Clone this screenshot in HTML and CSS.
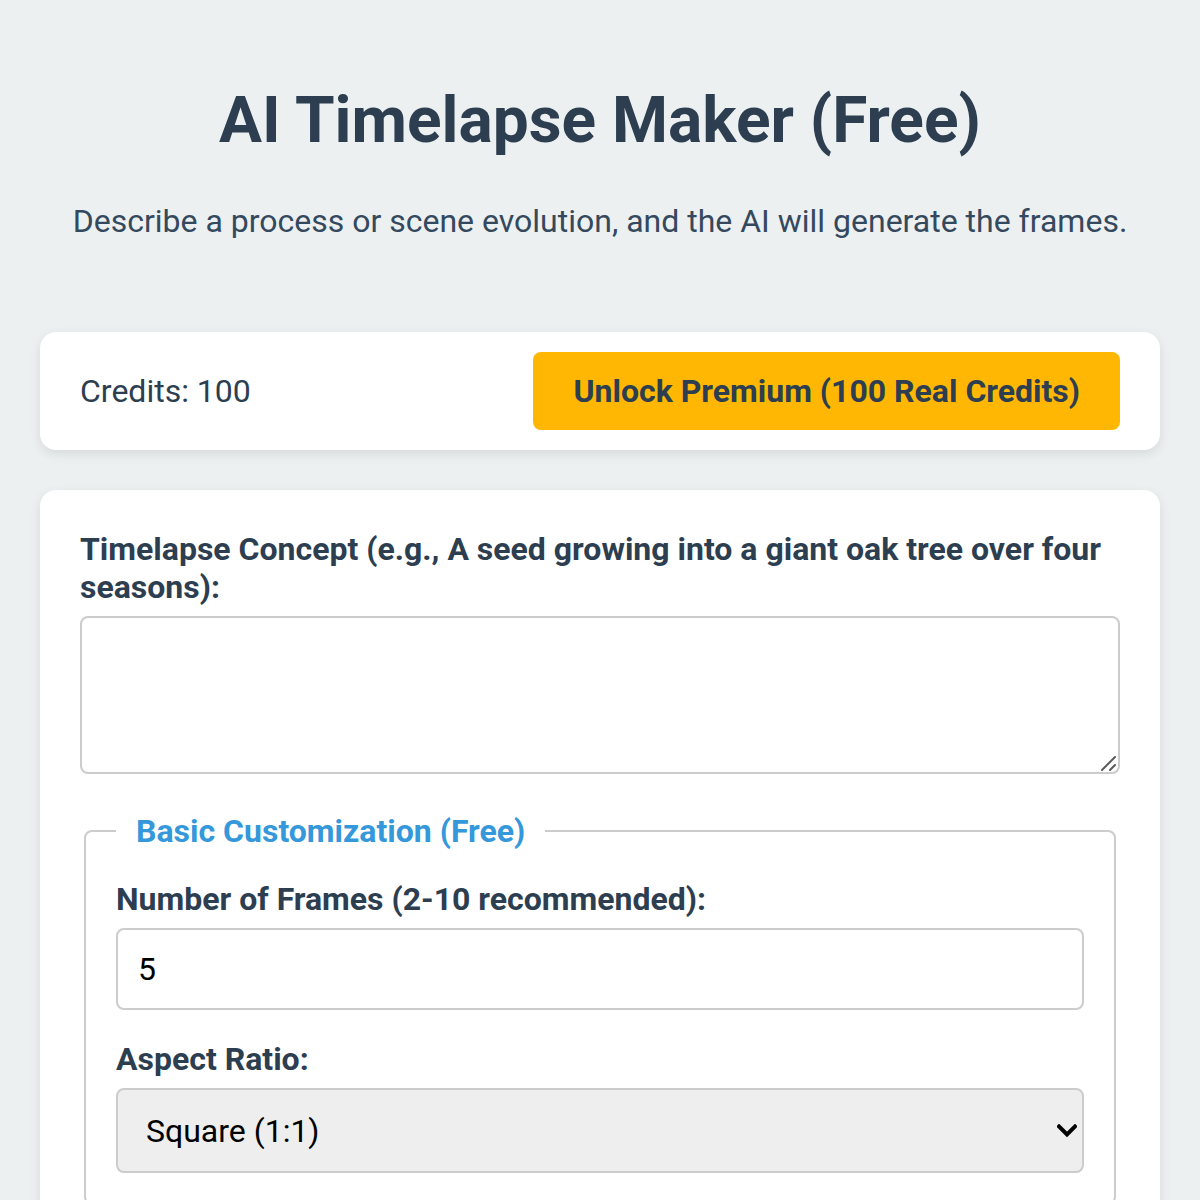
FILE: index.html
```html
<!DOCTYPE html>
<html lang="en">
<head>
<meta charset="utf-8">
<title>AI Timelapse Maker (Free)</title>
<link rel="stylesheet" href="styles.css">
</head>
<body>
<main class="page">
  <header class="intro">
    <h1 class="title">AI Timelapse Maker (Free)</h1>
    <p class="subtitle">Describe a process or scene evolution, and the AI will generate the frames.</p>
  </header>

  <section class="card credits-bar">
    <span class="credits">Credits: <span id="credit-count">100</span></span>
    <button class="btn-premium" type="button">Unlock Premium (100 Real Credits)</button>
  </section>

  <section class="card form-card">
    <div class="field">
      <label class="label" for="concept">Timelapse Concept (e.g., A seed growing into a giant oak tree over four seasons):</label>
      <div class="textarea-wrap">
        <textarea id="concept" class="textarea"></textarea>
        <svg class="grip" width="16" height="16" viewBox="0 0 16 16" aria-hidden="true">
          <line x1="1" y1="15" x2="14" y2="2" />
          <line x1="9" y1="15" x2="14" y2="10" />
        </svg>
      </div>
    </div>

    <fieldset class="group">
      <legend class="group-title">Basic Customization (Free)</legend>
      <div class="field">
        <label class="label" for="frames">Number of Frames (2-10 recommended):</label>
        <input id="frames" class="input" type="number" value="5">
      </div>
      <div class="field">
        <label class="label" for="ratio">Aspect Ratio:</label>
        <div class="select-wrap">
          <select id="ratio" class="select">
            <option>Square (1:1)</option>
            <option>Landscape (16:9)</option>
            <option>Portrait (9:16)</option>
          </select>
          <svg class="chevron" width="20" height="14" viewBox="0 0 20 14" aria-hidden="true">
            <polyline points="2,2.5 10,10.5 18,2.5" />
          </svg>
        </div>
      </div>
    </fieldset>
  </section>
</main>
</body>
</html>
```

FILE: styles.css
```css
* {
  box-sizing: border-box;
}

html, body {
  margin: 0;
  background: #ecf0f1;
}

body {
  font-family: Roboto, "Liberation Sans", Arial, sans-serif;
  font-size: 32px;
  color: #2c3e50;
}

.page {
  padding: 40px;
}

.intro {
  text-align: center;
  padding-top: 42px;
  margin-bottom: 92px;
}

.title {
  margin: 0;
  font-size: 64px;
  font-weight: 700;
  line-height: 77px;
  color: #2c3e50;
}

.subtitle {
  margin: 43px 0 0;
  font-size: 32px;
  line-height: 38px;
  color: #34495e;
}

.card {
  background: #ffffff;
  border-radius: 16px;
  box-shadow: 0 4px 12px rgba(0, 0, 0, 0.09);
  margin-bottom: 40px;
}

.credits-bar {
  display: flex;
  justify-content: space-between;
  align-items: center;
  padding: 20px 40px;
}

.credits {
  font-size: 32px;
}

.btn-premium {
  font-family: inherit;
  font-size: 32px;
  font-weight: 700;
  color: #2c3e50;
  background: #ffb703;
  border: none;
  border-radius: 8px;
  height: 78px;
  padding: 0 40px;
  cursor: pointer;
}

.form-card {
  padding: 40px;
}

.label {
  display: block;
  font-size: 32px;
  font-weight: 700;
  line-height: 38px;
  margin-bottom: 10px;
  color: #2c3e50;
}

.textarea-wrap {
  position: relative;
}

.textarea {
  display: block;
  width: 100%;
  height: 158px;
  border: 2px solid #cccccc;
  border-radius: 8px;
  font-family: inherit;
  font-size: 32px;
  padding: 16px 20px;
  resize: none;
}

.grip {
  position: absolute;
  right: 3px;
  bottom: 3px;
  pointer-events: none;
  stroke: #5a5a5a;
  stroke-width: 2;
  stroke-linecap: round;
}

.group {
  margin: 38px 4px 0;
  padding: 0 30px 30px;
  border: 2px solid #cccccc;
  border-radius: 8px;
}

.group-title {
  padding: 0 20px;
  font-size: 32px;
  font-weight: 700;
  line-height: 38px;
  color: #3498db;
}

.group .field {
  margin-top: 30px;
}

.input {
  display: block;
  width: 100%;
  height: 82px;
  border: 2px solid #cccccc;
  border-radius: 8px;
  padding: 0 20px;
  font-family: inherit;
  font-size: 32px;
  color: #000000;
  background: #ffffff;
}

.select-wrap {
  position: relative;
}

.select {
  display: block;
  width: 100%;
  height: 85px;
  border: 2px solid #cccccc;
  border-radius: 8px;
  padding: 0 60px 0 28px;
  font-family: inherit;
  font-size: 32px;
  color: #000000;
  background-color: #eeeeee;
  appearance: none;
  -webkit-appearance: none;
}

.chevron {
  position: absolute;
  right: 7px;
  top: 50%;
  margin-top: -7px;
  pointer-events: none;
  fill: none;
  stroke: #000000;
  stroke-width: 4;
  stroke-linecap: square;
}
```
